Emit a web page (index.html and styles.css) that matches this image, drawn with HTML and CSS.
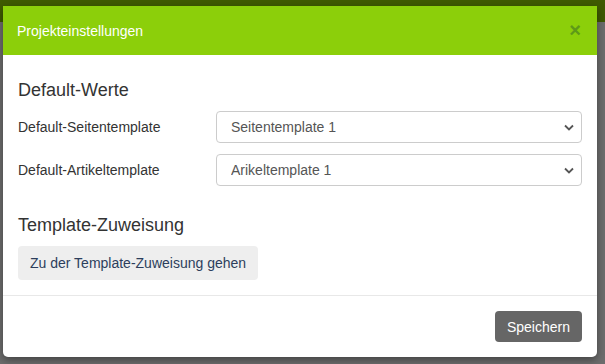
FILE: index.html
```html
<!DOCTYPE html>
<html lang="de">
<head>
    <meta charset="UTF-8">
    <meta name="viewport" content="width=device-width, initial-scale=1.0">
    <title>Projekteinstellungen</title>
    <link rel="stylesheet" href="styles.css">
</head>
<body>
    <div class="topbar"></div>
    <div class="modal">
        <div class="modal-header">
            <span class="modal-title">Projekteinstellungen</span>
            <span class="close">&times;</span>
        </div>
        <div class="modal-body">
            <h4>Default-Werte</h4>
            <div class="form-row">
                <label>Default-Seitentemplate</label>
                <div class="select-wrap">
                    <select><option>Seitentemplate 1</option></select>
                    <svg class="chevron" width="10" height="7" viewBox="0 0 10 7"><path d="M1 1.5 L5 5.5 L9 1.5" fill="none" stroke="#555" stroke-width="1.8"/></svg>
                </div>
            </div>
            <div class="form-row">
                <label>Default-Artikeltemplate</label>
                <div class="select-wrap">
                    <select><option>Arikeltemplate 1</option></select>
                    <svg class="chevron" width="10" height="7" viewBox="0 0 10 7"><path d="M1 1.5 L5 5.5 L9 1.5" fill="none" stroke="#555" stroke-width="1.8"/></svg>
                </div>
            </div>
            <h4 class="second">Template-Zuweisung</h4>
            <button class="btn-light">Zu der Template-Zuweisung gehen</button>
        </div>
        <div class="modal-footer">
            <button class="btn-save">Speichern</button>
        </div>
    </div>
</body>
</html>
```

FILE: styles.css
```css
body {
    margin: 0;
    height: 364px;
    overflow: hidden;
    font-family: "Liberation Sans", Arial, sans-serif;
    background-color: #6d6d6d;
}
.topbar {
    height: 22px;
    background-color: #3f5a02;
    margin-bottom: -16px;
}
.modal {
    position: relative;
    margin-left: 3px;
    width: 594px;
    background-color: #fff;
    border-radius: 0 0 5px 5px;
    box-shadow: 0 3px 8px rgba(0, 0, 0, 0.4);
}
.modal-header {
    display: flex;
    justify-content: space-between;
    align-items: center;
    height: 49px;
    padding: 0 16px 0 14px;
    background-color: #8ccf0a;
}
.modal-title {
    color: #fff;
    font-size: 14px;
}
.close {
    color: #5e9a18;
    font-size: 20px;
    font-weight: bold;
}
.modal-body {
    padding: 15px 15px 15px 15px;
    border-bottom: 1px solid #e8e8e8;
}
h4 {
    margin: 10px 0 11px 0;
    font-size: 18px;
    font-weight: normal;
    line-height: 20px;
    color: #333;
}
h4.second {
    margin-top: 29px;
    margin-bottom: 10px;
}
.form-row {
    display: grid;
    grid-template-columns: 198px 1fr;
    align-items: center;
    margin: 0 0 11px 0;
}
.form-row label {
    font-size: 14px;
    color: #333;
}
.select-wrap {
    position: relative;
}
select {
    appearance: none;
    width: 100%;
    height: 32px;
    padding: 0 14px;
    font-family: "Liberation Sans", Arial, sans-serif;
    font-size: 14px;
    color: #555;
    background-color: #fff;
    border: 1px solid #ccc;
    border-radius: 4px;
}
.chevron {
    position: absolute;
    right: 8px;
    top: 13px;
}
.btn-light {
    margin-top: 1px;
    height: 34px;
    padding: 0 12px;
    font-family: "Liberation Sans", Arial, sans-serif;
    font-size: 14px;
    color: #2c3e5c;
    background-color: #eeeeee;
    border: none;
    border-radius: 4px;
}
.modal-footer {
    display: flex;
    justify-content: flex-end;
    padding: 15px;
}
.btn-save {
    height: 31px;
    padding: 0 12px;
    font-family: "Liberation Sans", Arial, sans-serif;
    font-size: 14px;
    color: #fff;
    background-color: #666;
    border: none;
    border-radius: 4px;
}
```
